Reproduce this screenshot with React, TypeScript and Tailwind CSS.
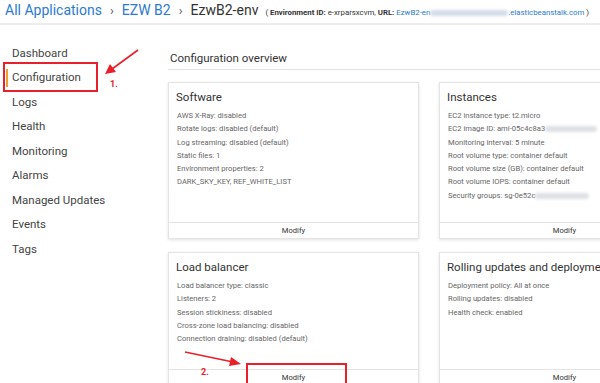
import React from 'react';

const navItems = [
  'Dashboard',
  'Configuration',
  'Logs',
  'Health',
  'Monitoring',
  'Alarms',
  'Managed Updates',
  'Events',
  'Tags',
];

function Blur({ w, c }: { w: string; c: string }) {
  return <span className={`inline-block ${w} ${c} h-[6px] align-middle rounded-sm blur-[1.5px]`} />;
}

function Card({
  title,
  items,
  h,
}: {
  title: string;
  items: React.ReactNode[];
  h: string;
}) {
  return (
    <div className={`${h} bg-white border border-[#e4e4e4] shadow-[0_1px_3px_rgba(0,0,0,0.12)] flex flex-col`}>
      <div className="px-[7px] pt-[7px] text-[11.5px] leading-[14px] text-[#333] whitespace-nowrap">{title}</div>
      <div className="mt-[5px] px-[8px]">
        {items.map((it, i) => (
          <div key={i} className="text-[7.6px] leading-[13.3px] text-[#666] whitespace-nowrap">
            {it}
          </div>
        ))}
      </div>
      <div className="mt-auto h-[16px] border-t border-[#e4e4e4] flex items-center justify-center text-[7.6px] text-[#333]">
        Modify
      </div>
    </div>
  );
}

export default function App() {
  return (
    <div className="relative w-[600px] h-[383px] overflow-hidden bg-white font-['Roboto',sans-serif]">
      <header className="h-[25px] border-b-2 border-[#ededed] pl-[5px] flex items-baseline whitespace-nowrap">
        <span className="text-[14px] leading-[20px] text-[#2b7bd0]">All Applications</span>
        <span className="mx-[8px] text-[13px] text-[#555]">›</span>
        <span className="text-[14px] leading-[20px] text-[#2b7bd0]">EZW B2</span>
        <span className="mx-[8px] text-[13px] text-[#555]">›</span>
        <span className="text-[14px] leading-[20px] text-[#333]">EzwB2-env</span>
        <span className="ml-[7px] text-[7.8px] text-[#333]">
          ( <b>Environment ID:</b> e-xrparsxcvm, <b>URL:</b>{' '}
          <span className="text-[#2b7bd0]">
            EzwB2-en<Blur w="w-[78px]" c="bg-[#d3dcea]" />.elasticbeanstalk.com
          </span>{' '}
          )
        </span>
      </header>

      <div className="flex">
        <nav className="w-[168px] shrink-0 pt-[16px]">
          {navItems.map((n) => (
            <div key={n} className="relative h-[24.5px] pl-[12px] flex items-center text-[11.5px] text-[#444]">
              {n === 'Configuration' && <span className="absolute left-[6px] top-[3px] w-[2px] h-[18px] bg-[#f0a030]" />}
              {n}
            </div>
          ))}
        </nav>

        <main className="flex-1 pt-[26px]">
          <div className="border-b border-[#e2e2e2] pb-[4px] pl-[2px] text-[11.5px] leading-[14px] text-[#333]">
            Configuration overview
          </div>
          <div className="mt-[12px] grid grid-cols-[251px_251px] gap-x-[20px] gap-y-[13px]">
            <Card
              title="Software"
              h="h-[157px]"
              items={[
                'AWS X-Ray: disabled',
                'Rotate logs: disabled (default)',
                'Log streaming: disabled (default)',
                'Static files: 1',
                'Environment properties: 2',
                'DARK_SKY_KEY, REF_WHITE_LIST',
              ]}
            />
            <Card
              title="Instances"
              h="h-[157px]"
              items={[
                'EC2 instance type: t2.micro',
                <>EC2 image ID: ami-05c4c8a3<Blur w="w-[52px]" c="bg-[#dde0e4]" /></>,
                'Monitoring interval: 5 minute',
                'Root volume type: container default',
                'Root volume size (GB): container default',
                'Root volume IOPS: container default',
                <>Security groups: sg-0e52c<Blur w="w-[54px]" c="bg-[#dde0e4]" /></>,
              ]}
            />
            <Card
              title="Load balancer"
              h="h-[134px]"
              items={[
                'Load balancer type: classic',
                'Listeners: 2',
                'Session stickiness: disabled',
                'Cross-zone load balancing: disabled',
                'Connection draining: disabled (default)',
              ]}
            />
            <Card
              title="Rolling updates and deployments"
              h="h-[134px]"
              items={['Deployment policy: All at once', 'Rolling updates: disabled', 'Health check: enabled']}
            />
          </div>
        </main>
      </div>

      {/* annotations */}
      <div className="absolute left-[3px] top-[62px] w-[95px] h-[30px] border-2 border-[#e8202a]" />
      <div className="absolute left-[246px] top-[363px] w-[101px] h-[24px] border-2 border-[#e8202a]" />
      <span className="absolute left-[110px] top-[78px] text-[9px] font-bold text-[#e8202a]">1.</span>
      <span className="absolute left-[201px] top-[366px] text-[9px] font-bold text-[#e8202a]">2.</span>
      <svg className="absolute inset-0 pointer-events-none" width="600" height="383">
        <line x1="138" y1="50" x2="112" y2="69" stroke="#e8202a" strokeWidth="1.6" />
        <polygon points="105,74 110,64 116,72" fill="#e8202a" />
        <line x1="185" y1="352" x2="233" y2="362" stroke="#e8202a" strokeWidth="1.6" />
        <polygon points="241,364 231,357 229,366" fill="#e8202a" />
      </svg>
    </div>
  );
}
